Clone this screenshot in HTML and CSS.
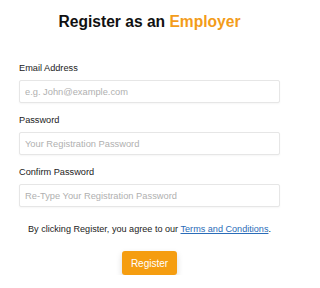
FILE: index.html
```html
<!DOCTYPE html>
<html>
<head>
<meta charset="utf-8">
<link rel="stylesheet" href="styles.css">
</head>
<body>
<div class="page">
  <h1 class="title">Register as an <span class="accent">Employer</span></h1>
  <form class="form">
    <div class="field">
      <label class="label">Email Address</label>
      <input class="input" type="text" placeholder="e.g. John@example.com">
    </div>
    <div class="field">
      <label class="label">Password</label>
      <input class="input" type="password" placeholder="Your Registration Password">
    </div>
    <div class="field">
      <label class="label">Confirm Password</label>
      <input class="input" type="password" placeholder="Re-Type Your Registration Password">
    </div>
    <p class="terms">By clicking Register, you agree to our <a class="link" href="#">Terms and Conditions</a>.</p>
    <div class="actions">
      <button class="btn" type="button">Register</button>
    </div>
  </form>
</div>
</body>
</html>
```
FILE: styles.css
```css
html, body {
  margin: 0;
  padding: 0;
  background: #fff;
}
body {
  font-family: "Liberation Sans", Arial, sans-serif;
  color: #222;
}
.page {
  box-sizing: border-box;
  width: 288px;
  padding: 0 8px 0 19px;
}
.title {
  margin: 12px 0 0;
  font-size: 15.6px;
  line-height: 20px;
  font-weight: bold;
  text-align: center;
  color: #111;
}
.accent {
  color: #f39c1a;
}
.form {
  display: flex;
  flex-direction: column;
  margin-top: 30px;
}
.field {
  display: flex;
  flex-direction: column;
  margin-bottom: 11px;
}
.label {
  font-size: 9.2px;
  line-height: 12px;
  color: #222;
  margin-bottom: 6px;
}
.input {
  box-sizing: border-box;
  height: 23px;
  border: 1px solid #e6e6e6;
  border-radius: 2px;
  padding: 0 5px;
  font-family: "Liberation Sans", Arial, sans-serif;
  font-size: 9.3px;
  color: #333;
  box-shadow: 0 1px 2px rgba(0,0,0,0.04);
  outline: none;
}
.input::placeholder {
  color: #b0b0b0;
}
.terms {
  margin: 5px 0 0;
  text-align: center;
  font-size: 9.1px;
  line-height: 12px;
  color: #222;
}
.link {
  color: #2a6cb8;
  text-decoration: underline;
}
.actions {
  display: flex;
  justify-content: center;
  margin-top: 16px;
}
.btn {
  background: #f59d10;
  color: #fff;
  border: none;
  border-radius: 3px;
  font-family: "Liberation Sans", Arial, sans-serif;
  font-size: 10px;
  height: 24px;
  width: 55px;
  padding: 0;
  box-shadow: 0 3px 6px rgba(0,0,0,0.15);
}
```
